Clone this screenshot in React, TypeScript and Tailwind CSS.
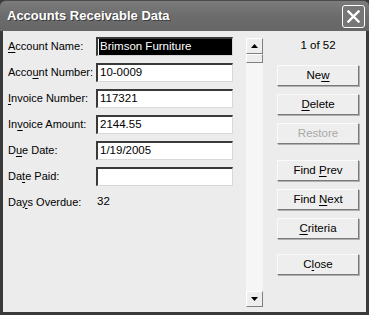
import React from "react";

const font = { fontFamily: '"Liberation Sans", Arial, sans-serif' };

function Key({ pre, k, post }: { pre: string; k: string; post: string }) {
  return (
    <span className="whitespace-pre">
      {pre}
      <span className="underline underline-offset-2">{k}</span>
      {post}
    </span>
  );
}

const rows: { label: [string, string, string]; value: string; selected?: boolean }[] = [
  { label: ["", "A", "ccount Name:"], value: "Brimson Furniture", selected: true },
  { label: ["Acco", "u", "nt Number:"], value: "10-0009" },
  { label: ["", "I", "nvoice Number:"], value: "117321" },
  { label: ["In", "v", "oice Amount:"], value: "2144.55" },
  { label: ["D", "u", "e Date:"], value: "1/19/2005" },
  { label: ["Da", "t", "e Paid:"], value: "" },
];

function Field({ value, selected }: { value: string; selected?: boolean }) {
  return (
    <div className="h-[19px] w-[137px] border-t-2 border-l-2 border-t-[#3a3a3a] border-l-[#3a3a3a] border-b border-r border-b-[#d8d8d8] border-r-[#d8d8d8] bg-white flex items-center pl-[1px]">
      <span
        className={`text-[11.5px] leading-none px-[1px] ${
          selected ? "bg-black text-white w-full h-full flex items-center" : "text-black"
        }`}
      >
        {value}
      </span>
    </div>
  );
}

function Btn({ children, disabled }: { children: React.ReactNode; disabled?: boolean }) {
  return (
    <div
      className={`h-[21px] w-[82px] flex items-center justify-center text-[11.5px] bg-[#eeeeee] border border-t-[#fafafa] border-l-[#fafafa] border-b-[#7a7a7a] border-r-[#7a7a7a] shadow-[1px_1px_0_#b0b0b0] ${
        disabled ? "text-[#a8a8a8]" : "text-black"
      }`}
    >
      {children}
    </div>
  );
}

function ArrowBtn({ up }: { up?: boolean }) {
  return (
    <div className="h-[16px] w-[17px] bg-[#eeeeee] border border-t-white border-l-white border-b-[#808080] border-r-[#808080] flex items-center justify-center">
      <svg width="7" height="4" viewBox="0 0 7 4">
        <path d={up ? "M0 4 L3.5 0 L7 4 Z" : "M0 0 L3.5 4 L7 0 Z"} fill="#000" />
      </svg>
    </div>
  );
}

export default function App() {
  return (
    <div className="w-[369px] h-[315px] bg-[#3a3a3a] flex flex-col" style={font}>
      {/* title bar */}
      <div className="h-[31px] shrink-0 flex items-center justify-between pl-[7px] pr-[4px] rounded-t-[6px] bg-gradient-to-b from-[#7c7c7c] via-[#6c6c6c] to-[#666666] border-t border-[#4a4a4a]">
        <span className="text-white font-bold text-[13px] [text-shadow:1px_1px_0_#3c3c3c]">
          Accounts Receivable Data
        </span>
        <div className="h-[23px] w-[23px] rounded-[3px] border border-white bg-[#767676] flex items-center justify-center">
          <svg width="13" height="13" viewBox="0 0 13 13">
            <path d="M1.5 1.5 L11.5 11.5 M11.5 1.5 L1.5 11.5" stroke="#fff" strokeWidth="2.4" strokeLinecap="square" />
          </svg>
        </div>
      </div>

      {/* body */}
      <div className="flex-1 mx-[3px] mb-[3px] bg-[#ececec] flex">
        <div className="pt-[2px] pl-[5px] w-[240px] text-[11px] text-black">
          {rows.map((r, i) => (
            <div key={i} className="h-[26px] flex items-center">
              <div className="w-[88px] shrink-0 whitespace-nowrap">
                <Key pre={r.label[0]} k={r.label[1]} post={r.label[2]} />
              </div>
              <Field value={r.value} selected={r.selected} />
            </div>
          ))}
          <div className="h-[26px] flex items-center">
            <div className="w-[88px] shrink-0 whitespace-nowrap">
              <Key pre="Da" k="y" post="s Overdue:" />
            </div>
            <span className="pl-[1px] text-[11.5px]">32</span>
          </div>
        </div>

        {/* scrollbar */}
        <div className="mt-[7px] mb-[5px] ml-[3px] w-[17px] bg-[#f6f6f6] flex flex-col justify-between">
          <div>
            <ArrowBtn up />
            <div className="h-[9px] w-[17px] bg-[#eeeeee] border border-t-white border-l-white border-b-[#808080] border-r-[#808080]" />
          </div>
          <ArrowBtn />
        </div>

        {/* buttons */}
        <div className="pl-[14px] pt-[7px] flex flex-col text-[11.5px]">
          <div className="h-[14px] w-[82px] text-center leading-[14px]">1 of 52</div>
          <div className="mt-[13px] flex flex-col gap-[8px]">
            <Btn>
              <Key pre="Ne" k="w" post="" />
            </Btn>
            <Btn>
              <Key pre="" k="D" post="elete" />
            </Btn>
            <Btn disabled>Restore</Btn>
          </div>
          <div className="mt-[16px] flex flex-col gap-[8px]">
            <Btn>
              <Key pre="Find " k="P" post="rev" />
            </Btn>
            <Btn>
              <Key pre="Find " k="N" post="ext" />
            </Btn>
            <Btn>
              <Key pre="" k="C" post="riteria" />
            </Btn>
          </div>
          <div className="mt-[15px]">
            <Btn>
              <Key pre="C" k="l" post="ose" />
            </Btn>
          </div>
        </div>
      </div>
    </div>
  );
}
